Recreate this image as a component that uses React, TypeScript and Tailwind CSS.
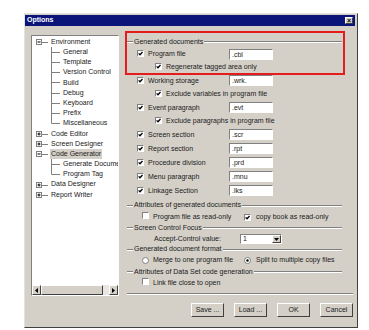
import React from 'react';

const sunken = 'border border-t-[#808080] border-l-[#808080] border-b-white border-r-white';
const raised = 'border border-t-white border-l-white border-b-[#404040] border-r-[#404040]';

function Check({ on }: { on?: boolean }) {
    return (
        <span className={`inline-flex items-center justify-center shrink-0 w-[7px] h-[7px] bg-white ${sunken}`}>
            {on && (
                <svg width="5" height="5" viewBox="0 0 5 5">
                    <path d="M0.6 2.4 L2 3.8 L4.5 1" stroke="#000" strokeWidth="1.3" fill="none" />
                </svg>
            )}
        </span>
    );
}

function Radio({ on }: { on?: boolean }) {
    return (
        <svg width="7" height="7" viewBox="0 0 7 7" className="shrink-0">
            <circle cx="3.5" cy="3.5" r="3" fill="#fff" stroke="#808080" strokeWidth="1" />
            {on && <circle cx="3.5" cy="3.5" r="1.2" fill="#000" />}
        </svg>
    );
}

function Field({ value }: { value: string }) {
    return (
        <div className={`absolute left-[102px] top-[1px] w-[44px] h-[11px] bg-white ${sunken} pl-[2px] text-[7px] leading-[9px]`}>
            {value}
        </div>
    );
}

function Group({ label, h }: { label: string; h: string }) {
    return (
        <div className={`flex items-center mr-[11px] ${h}`}>
            <span className="w-[6px] h-[2px] border-t border-t-[#808080] border-b border-b-white" />
            <span className="px-[1px]">{label}</span>
            <span className="flex-1 h-[2px] border-t border-t-[#808080] border-b border-b-white" />
        </div>
    );
}

function CheckRow({ label, ext, sub, h }: { label: string; ext?: string; sub?: boolean; h: string }) {
    return (
        <div className={`relative flex items-center ${h}`}>
            <span className={sub ? 'ml-[28px]' : 'ml-[10px]'}>
                <Check on />
            </span>
            <span className="ml-[4px]">{label}</span>
            {ext && <Field value={ext} />}
        </div>
    );
}

const tree: { label: string; level: 0 | 1; box?: '-' | '+'; last?: boolean; first?: boolean; sel?: boolean }[] = [
    { label: 'Environment', level: 0, box: '-' },
    { label: 'General', level: 1, first: true },
    { label: 'Template', level: 1 },
    { label: 'Version Control', level: 1 },
    { label: 'Build', level: 1 },
    { label: 'Debug', level: 1 },
    { label: 'Keyboard', level: 1 },
    { label: 'Prefix', level: 1 },
    { label: 'Miscellaneous', level: 1, last: true },
    { label: 'Code Editor', level: 0, box: '+' },
    { label: 'Screen Designer', level: 0, box: '+' },
    { label: 'Code Generator', level: 0, box: '-', sel: true },
    { label: 'Generate Documents', level: 1, first: true },
    { label: 'Program Tag', level: 1, last: true },
    { label: 'Data Designer', level: 0, box: '+' },
    { label: 'Report Writer', level: 0, box: '+' },
];

function TreeRow({ item }: { item: (typeof tree)[number] }) {
    if (item.level === 0) {
        return (
            <div className="flex items-center h-[10.2px] whitespace-nowrap">
                <svg width="15" height="10" viewBox="0 0 15 10" className="shrink-0 ml-[1px]">
                    <rect x="1.5" y="2.5" width="5" height="5" fill="#fff" stroke="#808080" />
                    <line x1="2.5" y1="5" x2="5.5" y2="5" stroke="#000" />
                    {item.box === '+' && <line x1="4" y1="3.5" x2="4" y2="6.5" stroke="#000" />}
                    <line x1="7" y1="5.5" x2="13" y2="5.5" stroke="#808080" />
                </svg>
                <span className={`px-[1px] ${item.sel ? 'bg-[#d4d0c8]' : ''}`}>{item.label}</span>
            </div>
        );
    }
    return (
        <div className="flex items-center h-[10.2px] whitespace-nowrap">
            <svg width="28" height="11" viewBox="0 0 28 11" className="shrink-0 ml-[1px]">
                <line x1="16.5" y1="0" x2="16.5" y2={item.last ? 5.5 : 11} stroke="#808080" />
                <line x1="16.5" y1="5.5" x2="25" y2="5.5" stroke="#808080" />
            </svg>
            <span>{item.label}</span>
        </div>
    );
}

export default function App() {
    return (
        <div className="w-[369px] h-[330px] bg-white overflow-hidden font-['Liberation_Sans',Arial,sans-serif] text-[7px] text-[#1a1a1a] pt-[13px] pl-[24px]">
            <div className="relative w-[334px] h-[315px] bg-[#d4d0c8] border border-t-[#e4e2dc] border-l-[#e4e2dc] border-b-[#404040] border-r-[#404040] pt-[1px]">
                <div className="flex items-center justify-between h-[11px] mr-[2px] bg-[#0a1479] pl-[2px] pr-[2px]">
                    <span className="text-white font-bold text-[7px]">Options</span>
                    <span className={`flex items-center justify-center w-[8px] h-[7px] bg-[#d4d0c8] ${raised} text-[7px] leading-none font-bold text-black`}>
                        ×
                    </span>
                </div>

                <div className="flex pt-[9px]">
                    <div className={`ml-[6px] w-[88px] h-[261px] bg-white ${sunken} flex flex-col`}>
                        <div className="flex-1 overflow-hidden pt-[1px] pl-[2px]">
                            {tree.map((t) => (
                                <TreeRow key={t.label} item={t} />
                            ))}
                        </div>
                        <div className="flex h-[10px] bg-[#e8e6e2]">
                            <span className={`w-[9px] h-[10px] bg-[#d4d0c8] ${raised} flex items-center justify-center`}>
                                <svg width="3" height="5" viewBox="0 0 3 5"><path d="M3 0 L0 2.5 L3 5 Z" fill="#000" /></svg>
                            </span>
                            <span className={`w-[62px] h-[10px] bg-[#d4d0c8] ${raised}`} />
                            <span className="flex-1" />
                            <span className={`w-[9px] h-[10px] bg-[#d4d0c8] ${raised} flex items-center justify-center`}>
                                <svg width="3" height="5" viewBox="0 0 3 5"><path d="M0 0 L3 2.5 L0 5 Z" fill="#000" /></svg>
                            </span>
                        </div>
                    </div>

                    <div className="ml-[8px] w-[226px] mt-[1px]">
                        <Group label="Generated documents" h="h-[12px]" />
                        <CheckRow label="Program file" ext=".cbl" h="h-[13px]" />
                        <CheckRow label="Regenerate tagged area only" sub h="h-[13px]" />
                        <CheckRow label="Working storage" ext=".wrk." h="h-[14px]" />
                        <CheckRow label="Exclude variables in program file" sub h="h-[13px]" />
                        <CheckRow label="Event paragraph" ext=".evt" h="h-[14px]" />
                        <CheckRow label="Exclude paragraphs in program file" sub h="h-[13px]" />
                        <CheckRow label="Screen section" ext=".scr" h="h-[14px]" />
                        <CheckRow label="Report section" ext=".rpt" h="h-[14px]" />
                        <CheckRow label="Procedure division" ext=".prd" h="h-[14px]" />
                        <CheckRow label="Menu paragraph" ext=".mnu" h="h-[14px]" />
                        <CheckRow label="Linkage Section" ext=".lks" h="h-[15px]" />

                        <Group label="Attributes of generated documents" h="h-[13px]" />
                        <div className="flex items-center h-[11px]">
                            <span className="ml-[15px]"><Check /></span>
                            <span className="ml-[4px] w-[91px]">Program file as read-only</span>
                            <Check on />
                            <span className="ml-[5px]">copy book as read-only</span>
                        </div>

                        <Group label="Screen Control Focus" h="h-[10px]" />
                        <div className="flex items-center h-[12px]">
                            <span className="ml-[27px] w-[86px]">Accept-Control value:</span>
                            <div className={`flex w-[42px] h-[10px] bg-white ${sunken}`}>
                                <span className="flex-1 pl-[2px] leading-[8px]">1</span>
                                <span className={`w-[9px] h-[8px] bg-[#d4d0c8] ${raised} flex items-center justify-center`}>
                                    <svg width="5" height="3" viewBox="0 0 5 3"><path d="M0 0 L5 0 L2.5 3 Z" fill="#000" /></svg>
                                </span>
                            </div>
                        </div>

                        <Group label="Generated document format" h="h-[9px]" />
                        <div className="flex items-center h-[13px]">
                            <span className="ml-[15px]"><Radio /></span>
                            <span className="ml-[4px] w-[91px]">Merge to one program file</span>
                            <Radio on />
                            <span className="ml-[5px]">Split to multiple copy files</span>
                        </div>

                        <Group label="Attributes of Data Set code generation" h="h-[10px]" />
                        <div className="flex items-center h-[12px]">
                            <span className="ml-[15px]"><Check /></span>
                            <span className="ml-[4px]">Link file close to open</span>
                        </div>

                        <div className="mt-[4px] h-[2px] border-t border-t-[#808080] border-b border-b-white" />

                        <div className="flex justify-end gap-[10px] mt-[8px]">
                            {['Save ...', 'Load ...', 'OK', 'Cancel'].map((b) => (
                                <button
                                    key={b}
                                    className={`w-[33px] h-[14px] bg-[#d4d0c8] ${raised} text-[7px] text-center leading-[12px] text-[#1a1a1a]`}
                                >
                                    {b}
                                </button>
                            ))}
                        </div>
                    </div>
                </div>

                <div className="absolute left-[100px] top-[17px] w-[220px] h-[44px] border-2 border-[#e41c1c]" />
            </div>
        </div>
    );
}
